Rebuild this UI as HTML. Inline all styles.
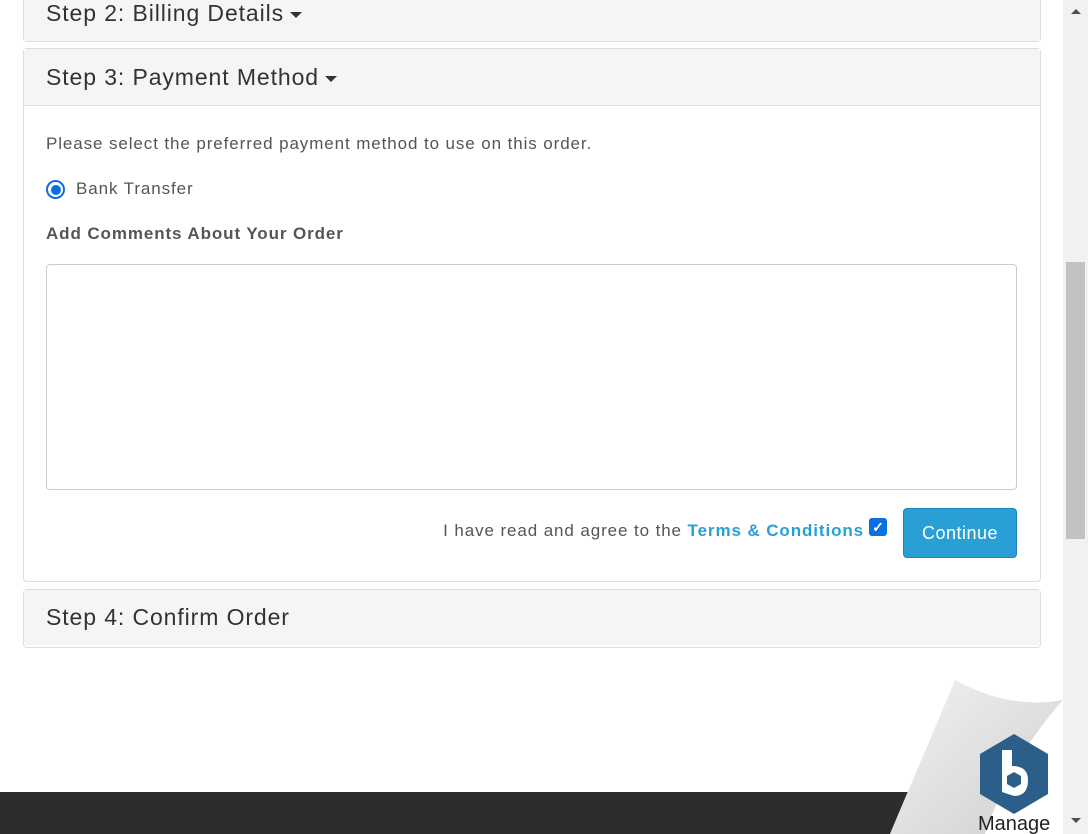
<!DOCTYPE html>
<html><head><style>
body{margin:0;width:1088px;height:834px;overflow:hidden;background:#fff;font-family:"Liberation Sans",sans-serif;color:#555;position:relative}
.panel{position:absolute;left:23px;width:1016px;border:1px solid #ddd;border-radius:4px;background:#fff}
.hd{background:#f5f5f5;color:#333;font-size:23px;padding-left:22px;box-sizing:border-box;letter-spacing:0.9px}
.caret{display:inline-block;border-left:6px solid transparent;border-right:6px solid transparent;border-top:6px solid #333;vertical-align:middle;margin-left:6px}
.t{position:absolute;font-size:17px;letter-spacing:0.9px;white-space:nowrap}
</style></head><body>
<div class="panel" style="top:-10px;height:50px"><div class="hd" style="height:50px;line-height:44px">Step 2: Billing Details<span class="caret"></span></div></div>
<div class="panel" style="top:48px;height:532px">
<div class="hd" style="height:57px;line-height:57px;border-bottom:1px solid #ddd">Step 3: Payment Method<span class="caret"></span></div>
</div>
<div class="t" style="left:46px;top:134px">Please select the preferred payment method to use on this order.</div>
<div style="position:absolute;left:46px;top:180px;width:19px;height:19px;border:2px solid #0a6fe0;border-radius:50%;box-sizing:border-box"><div style="position:absolute;left:2.5px;top:2.5px;width:10px;height:10px;border-radius:50%;background:#0a6fe0"></div></div>
<div class="t" style="left:76px;top:179px">Bank Transfer</div>
<div class="t" style="left:46px;top:224px;font-weight:bold">Add Comments About Your Order</div>
<div style="position:absolute;left:46px;top:264px;width:971px;height:226px;border:1px solid #ccc;border-radius:4px;box-sizing:border-box"></div>
<div class="t" style="right:224px;top:521px">I have read and agree to the <b style="color:#2a9fd6">Terms &amp; Conditions</b></div>
<div style="position:absolute;left:869px;top:518px;width:18px;height:18px;background:#0a6fe0;border-radius:3px;color:#fff;font-size:14px;line-height:18px;text-align:center;font-weight:bold">✓</div>
<div style="position:absolute;left:903px;top:508px;width:114px;height:50px;background:#2a9fd6;border:1px solid #1e87bb;border-radius:4px;box-sizing:border-box;color:#fff;font-size:18px;line-height:48px;text-align:center;letter-spacing:0.5px">Continue</div>
<div class="panel" style="top:589px;height:57px"><div class="hd" style="height:55px;line-height:55px">Step 4: Confirm Order</div></div>
<div style="position:absolute;left:0;top:792px;width:1063px;height:42px;background:#2d2d2d"></div>
<svg style="position:absolute;left:890px;top:680px" width="173" height="154">
<defs><linearGradient id="g" x1="0" y1="0" x2="1" y2="1"><stop offset="0" stop-color="#f2f2f2"/><stop offset="1" stop-color="#cfcfcf"/></linearGradient></defs>
<polygon points="65,0 173,20 173,154 0,154" fill="#fff"/>
<path d="M65,0 Q120,30 173,20 Q120,80 95,154 L0,154 Q40,60 65,0Z" fill="url(#g)"/>
<path d="M173,20 Q120,80 95,154 L173,154Z" fill="#fff"/>
<polygon points="124,54 158,74 158,114 124,134 90,114 90,74" fill="#2b5f8a"/>
<path d="M112,70 L122,70 L122,86 Q138,86 138,100 Q138,116 124,116 L112,112Z" fill="#fff"/>
<polygon points="124,92 131,96 131,104 124,108 117,104 117,96" fill="#2b5f8a"/>
<text x="88" y="150" font-family="Liberation Sans" font-size="20" fill="#222">Manage</text></svg>
<div style="position:absolute;left:1063px;top:0;width:25px;height:834px;background:#f1f1f1"></div>
<div style="position:absolute;left:1066px;top:262px;width:19px;height:277px;background:#c1c1c1"></div>
<div style="position:absolute;left:1071px;top:9px;border-left:5px solid transparent;border-right:5px solid transparent;border-bottom:5px solid #505050"></div>
<div style="position:absolute;left:1071px;top:818px;border-left:5px solid transparent;border-right:5px solid transparent;border-top:5px solid #505050"></div>
</body></html>
